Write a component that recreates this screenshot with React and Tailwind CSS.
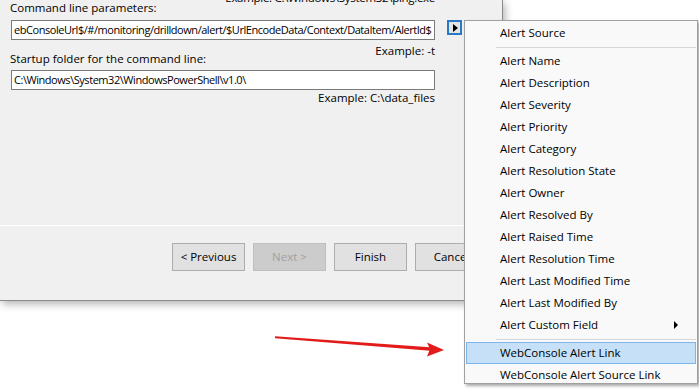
import { useState } from "react";

const menuItems = [
  "Alert Name",
  "Alert Description",
  "Alert Severity",
  "Alert Priority",
  "Alert Category",
  "Alert Resolution State",
  "Alert Owner",
  "Alert Resolved By",
  "Alert Raised Time",
  "Alert Resolution Time",
  "Alert Last Modified Time",
  "Alert Last Modified By",
];

const WinButton = ({ children, disabled }) => (
  <div
    className={
      disabled
        ? "flex h-[28px] w-[73px] items-center justify-center border border-[#bfbfbf] bg-[#cccccc] text-[#a0a0a0]"
        : "flex h-[28px] w-[73px] items-center justify-center border border-[#adadad] bg-[#e1e1e1] text-black"
    }
  >
    {children}
  </div>
);

const MenuItem = ({ label, active, submenu }) => (
  <div
    className={
      active
        ? "mx-px flex h-[22px] items-center border border-[#7eb4ea] bg-[#c5e0f7] pl-[33px] pr-3"
        : "mx-px flex h-[22px] items-center border border-transparent pl-[33px] pr-3"
    }
  >
    <span className="flex-1 whitespace-nowrap">{label}</span>
    {submenu && (
      <span className="mr-[5px] h-0 w-0 border-y-[4px] border-l-[4px] border-y-transparent border-l-black" />
    )}
  </div>
);

const MenuSeparator = () => (
  <div className="flex h-[6px] items-center pl-[31px] pr-px">
    <div className="h-px w-full bg-[#d7d7d7]" />
  </div>
);

export default function App() {
  const [active] = useState("WebConsole Alert Link");

  return (
    <div className="relative h-[391px] w-[699px] overflow-hidden bg-white font-['Segoe_UI','Open_Sans',sans-serif] text-[11.5px] text-black">
      {/* wizard dialog */}
      <div className="flex h-[301px] w-[503px] flex-col border-b border-r border-[#8a8a8a] bg-[#f0f0f0] shadow-[2px_3px_8px_rgba(0,0,0,0.3)]">
        <div className="flex flex-1 items-start">
          <div className="flex w-[435px] flex-col pl-[10px] leading-[14px]">
            <div className="-mt-[9px] h-[14px] whitespace-nowrap text-right tracking-[-0.3px]">Example: C:\Windows\System32\ping.exe</div>
            <div className="-mt-[4px] h-[14px]">Command line parameters:</div>
            <div className="ml-px mt-[5px] flex h-[20px] items-center overflow-hidden whitespace-nowrap border border-[#7a7a7a] bg-white pl-[2px] text-[11px] tracking-[-0.45px]">
              ebConsoleUrl$/#/monitoring/drilldown/alert/$UrlEncodeData/Context/DataItem/AlertId$
            </div>
            <div className="mt-[4px] h-[14px] text-right">Example: -t</div>
            <div className="-mt-[6px] h-[14px]">Startup folder for the command line:</div>
            <div className="ml-px mt-[4px] flex h-[20px] items-center overflow-hidden whitespace-nowrap border border-[#7a7a7a] bg-white pl-[2px] text-[11px] tracking-[-0.45px]">
              C:\Windows\System32\WindowsPowerShell\v1.0\
            </div>
            <div className="mt-px h-[14px] text-right">Example: C:\data_files</div>
          </div>
          <div className="ml-[12px] mt-[20px] flex h-[15px] w-[15px] items-center justify-center border-2 border-[#2a78c8] bg-[#e5e5e5]">
            <span className="ml-px h-0 w-0 border-y-[4px] border-l-[5px] border-y-transparent border-l-black" />
          </div>
        </div>
        <div className="h-px bg-white" />
        <div className="flex h-[74px] justify-end gap-[8px] pr-[14px] pt-[17px]">
          <WinButton>&lt; Previous</WinButton>
          <WinButton disabled>Next &gt;</WinButton>
          <WinButton>Finish</WinButton>
          <WinButton>Cancel</WinButton>
        </div>
      </div>

      {/* context menu */}
      <div className="absolute left-[464px] top-[20px] h-[364px] w-[234px] overflow-hidden border border-[#a0a0a0] bg-[#f9f9f9] pt-px shadow-[2px_2px_3px_rgba(0,0,0,0.35)]">
        <MenuItem label="Alert Source" />
        <MenuSeparator />
        {menuItems.map((label) => (
          <MenuItem key={label} label={label} />
        ))}
        <MenuItem label="Alert Custom Field" submenu />
        <MenuSeparator />
        <MenuItem label="WebConsole Alert Link" active={active === "WebConsole Alert Link"} />
        <MenuItem label="WebConsole Alert Source Link" />
      </div>

      {/* red pointer arrow */}
      <svg className="absolute left-0 top-0" width="699" height="391" viewBox="0 0 699 391">
        <polygon points="275,336.3 430,347.2 430,350.8 275,338.3" fill="#e31b1b" />
        <polygon points="444,350 427,342.5 430,349 427,356.5" fill="#e31b1b" />
      </svg>
    </div>
  );
}
